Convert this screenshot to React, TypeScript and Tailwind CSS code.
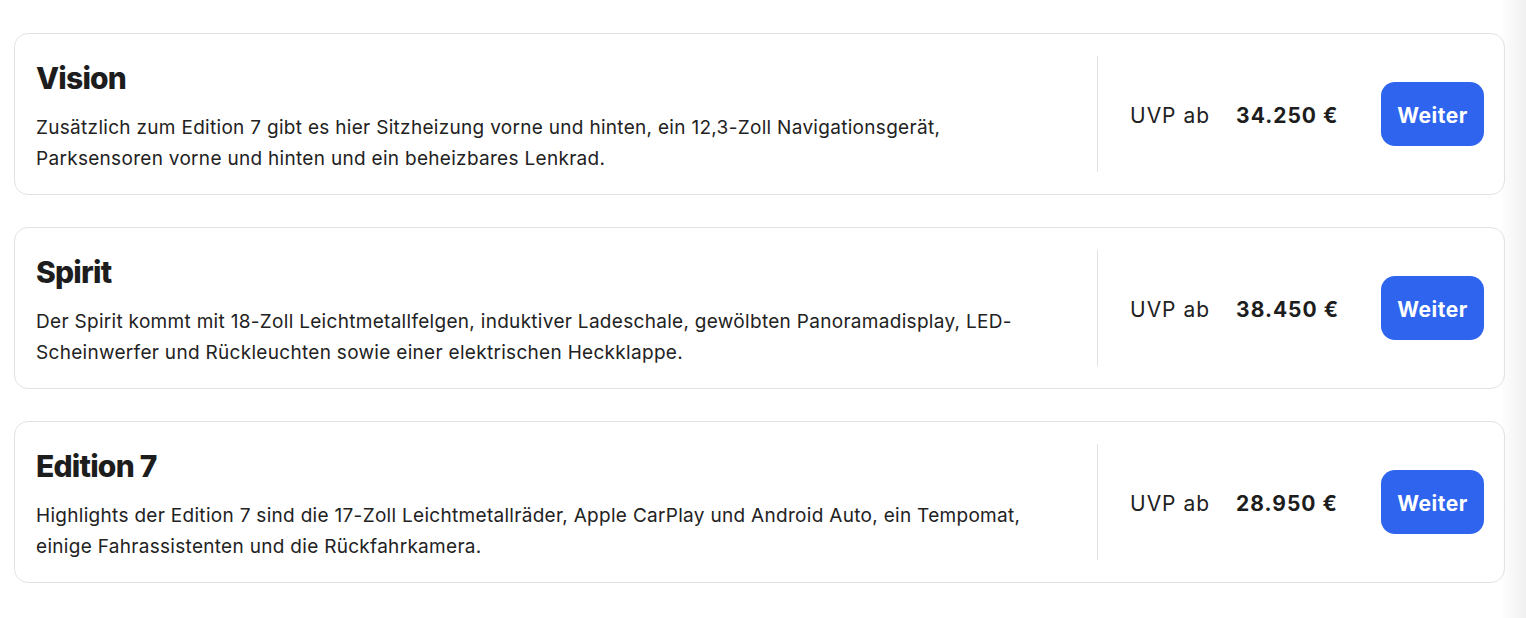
import React from 'react';

interface Trim {
  name: string;
  description: string;
  price: string;
}

const trims: Trim[] = [
  {
    name: 'Vision',
    description:
      'Zusätzlich zum Edition 7 gibt es hier Sitzheizung vorne und hinten, ein 12,3-Zoll Navigationsgerät, Parksensoren vorne und hinten und ein beheizbares Lenkrad.',
    price: '34.250 €',
  },
  {
    name: 'Spirit',
    description:
      'Der Spirit kommt mit 18-Zoll Leichtmetallfelgen, induktiver Ladeschale, gewölbten Panoramadisplay, LED-Scheinwerfer und Rückleuchten sowie einer elektrischen Heckklappe.',
    price: '38.450 €',
  },
  {
    name: 'Edition 7',
    description:
      'Highlights der Edition 7 sind die 17-Zoll Leichtmetallräder, Apple CarPlay und Android Auto, ein Tempomat, einige Fahrassistenten und die Rückfahrkamera.',
    price: '28.950 €',
  },
];

function TrimCard({ trim }: { trim: Trim }) {
  return (
    <div className="flex rounded-[14px] border border-[#e3e3e3] bg-white">
      {/* Name und Beschreibung */}
      <div className="flex-1 pt-[26px] pb-[20px] pl-[21px] pr-[48px]">
        <h2 className="text-[30px] leading-[36px] font-extrabold tracking-[-0.8px] text-[#1d1d1d]">{trim.name}</h2>
        <p className="mt-[16px] text-[19px] leading-[31px] tracking-[0.3px] text-[#222]">{trim.description}</p>
      </div>

      {/* Preis und Button */}
      <div className="my-[22px] flex w-[407px] items-center border-l border-[#e3e3e3] pl-[32px] pr-[20px]">
        <span className="mt-[4px] text-[21px] tracking-[1px] text-[#222]">UVP ab</span>
        <span className="mt-[4px] ml-[26px] text-[21px] font-bold tracking-[1px] text-[#1d1d1d]">{trim.price}</span>
        <button className="ml-auto h-[64px] w-[103px] rounded-[14px] bg-[#2e64ee] pt-[4px] text-[21px] font-bold tracking-[0.5px] text-white">
          Weiter
        </button>
      </div>
    </div>
  );
}

export default function App() {
  return (
    <div className="relative min-h-[618px] bg-white font-['Inter',sans-serif]">
      <div className="flex flex-col gap-[32px] pt-[33px] pl-[14px] pr-[21px]">
        {trims.map((trim) => (
          <TrimCard key={trim.name} trim={trim} />
        ))}
      </div>
      {/* Schatten am rechten Rand */}
      <div className="pointer-events-none absolute top-0 right-0 h-full w-[26px] bg-gradient-to-r from-transparent to-black/[0.06]" />
    </div>
  );
}
